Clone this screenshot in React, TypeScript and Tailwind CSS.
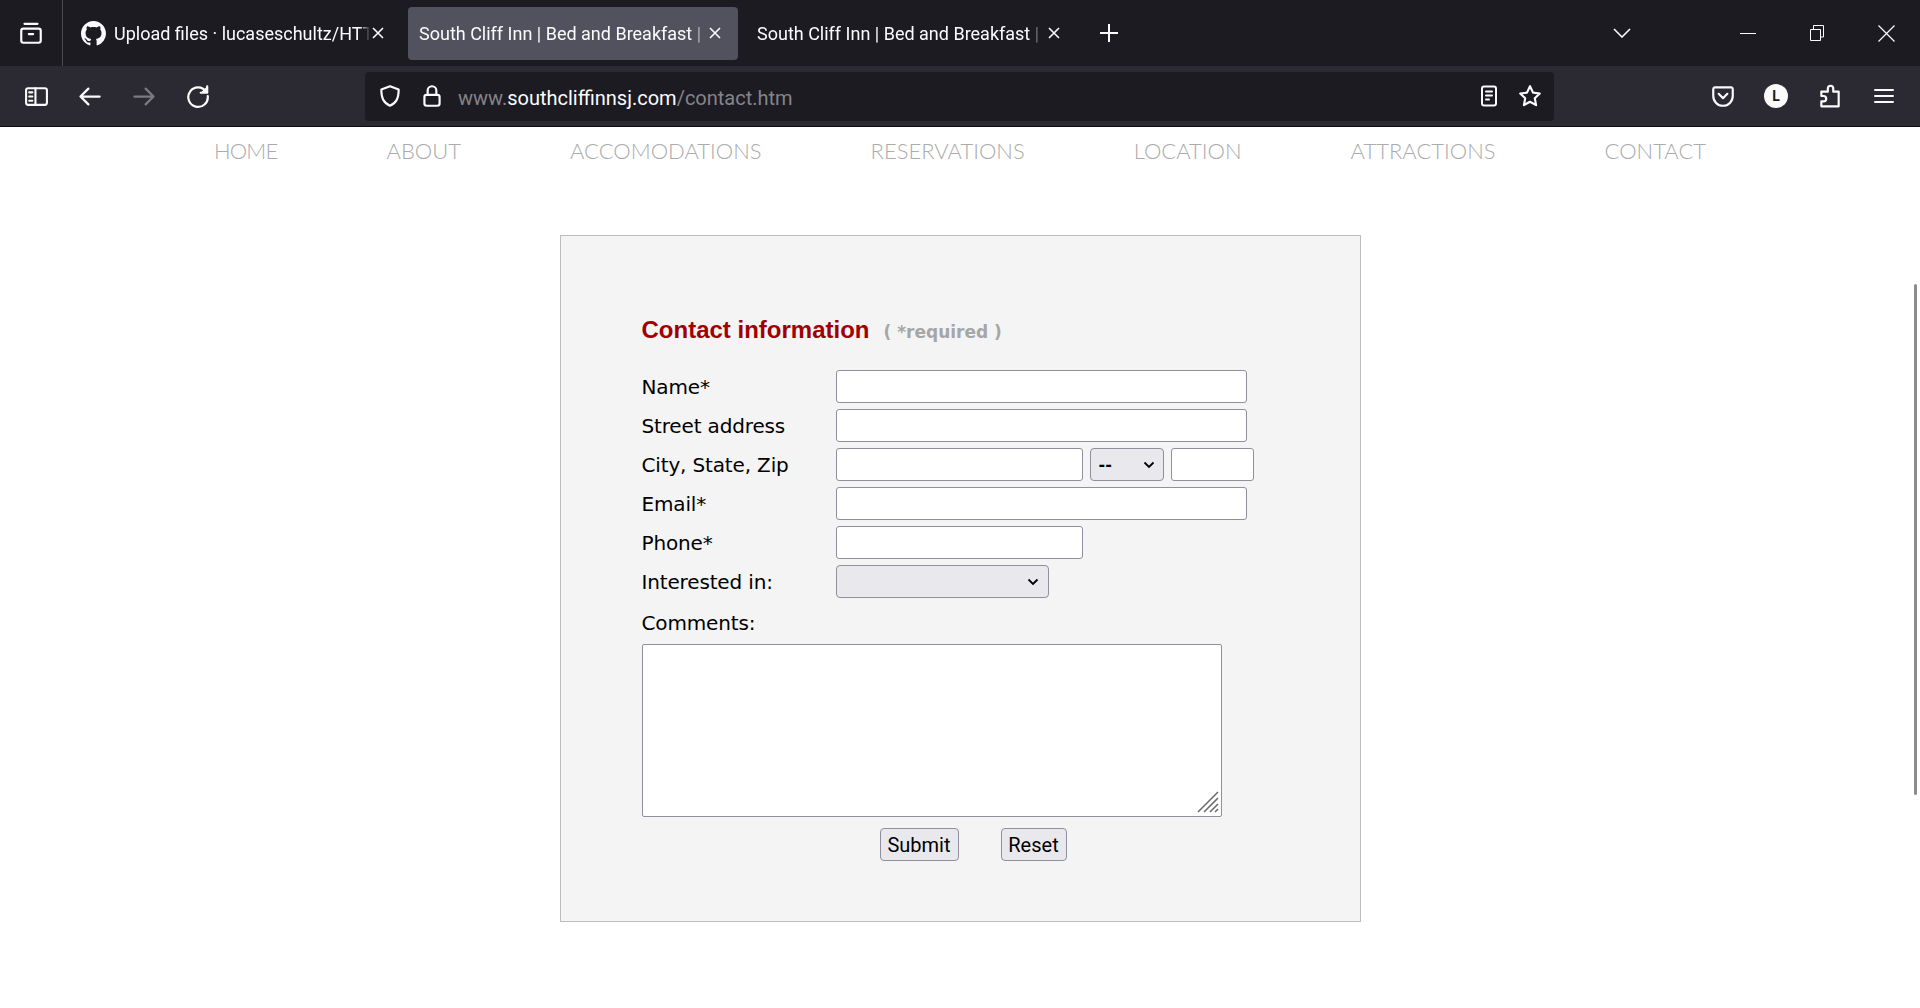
import React from "react";

const ui = "font-['Roboto',sans-serif]";
const label = "text-[20px] leading-[33px] text-black font-['DejaVu_Sans',sans-serif] tracking-[-0.15px]";
const inputCls = "h-[33px] rounded-[3px] border border-[#8f8f9d] bg-white";
const selectCls = "h-[33px] rounded-[4px] border border-[#8f8f9d] bg-[#e9e9ed] flex items-center justify-between";
const fade = "overflow-hidden whitespace-nowrap [mask-image:linear-gradient(to_right,black_96%,transparent)]";

function Chevron({ className = "" }: { className?: string }) {
  return (
    <svg className={className} width="12" height="8" viewBox="0 0 12 8" fill="none" stroke="#000" strokeWidth="1.8">
      <path d="M1.5 1.5 6 6l4.5-4.5" />
    </svg>
  );
}

function Close({ className = "" }: { className?: string }) {
  return (
    <svg className={className} width="12" height="12" viewBox="0 0 12 12" fill="none" stroke="#fbfbfe" strokeWidth="1.6">
      <path d="M1 1l10 10M11 1 1 11" />
    </svg>
  );
}

function Icon({ children, size = 22, className = "" }: { children: React.ReactNode; size?: number; className?: string }) {
  return (
    <svg className={className} width={size} height={size} viewBox="0 0 24 24" fill="none" stroke="#fbfbfe" strokeWidth="2" strokeLinecap="round" strokeLinejoin="round">
      {children}
    </svg>
  );
}

function Row({ name, children }: { name: string; children: React.ReactNode }) {
  return (
    <div className="flex h-[33px] items-center mb-[6px]">
      <div className={`w-[194px] mt-[2px] ${label}`}>{name}</div>
      {children}
    </div>
  );
}

export default function App() {
  return (
    <div className="h-[1008px] w-full overflow-hidden bg-white relative">
      {/* tab strip */}
      <div className={`h-[66px] bg-[#1c1b22] flex items-center text-[#fbfbfe] text-[18px] ${ui}`}>
        <div className="w-[63px] h-full flex items-center justify-center border-r border-[#4a4950]">
          <Icon size={26}>
            <rect x="3" y="8" width="18" height="13" rx="2" />
            <path d="M6 3.5h12M10 13h4" />
          </Icon>
        </div>
        <div className="w-[345px] h-[53px] flex items-center pl-[18px] shrink-0">
          <svg width="25" height="25" viewBox="0 0 16 16" fill="#fbfbfe" className="shrink-0">
            <path d="M8 0C3.58 0 0 3.58 0 8c0 3.54 2.29 6.53 5.47 7.59.4.07.55-.17.55-.38 0-.19-.01-.82-.01-1.49-2.01.37-2.53-.49-2.69-.94-.09-.23-.48-.94-.82-1.13-.28-.15-.68-.52-.01-.53.63-.01 1.08.58 1.23.82.72 1.21 1.87.87 2.33.66.07-.52.28-.87.51-1.07-1.78-.2-3.64-.89-3.64-3.95 0-.87.31-1.59.82-2.15-.08-.2-.36-1.02.08-2.12 0 0 .67-.21 2.2.82.64-.18 1.32-.27 2-.27s1.36.09 2 .27c1.53-1.04 2.2-.82 2.2-.82.44 1.1.16 1.92.08 2.12.51.56.82 1.27.82 2.15 0 3.07-1.87 3.75-3.65 3.95.29.25.54.73.54 1.48 0 1.07-.01 1.93-.01 2.2 0 .21.15.46.55.38A8.01 8.01 0 0 0 16 8c0-4.42-3.58-8-8-8z" />
          </svg>
          <div className={`ml-[8px] w-[256px] ${fade}`}>Upload files · lucaseschultz/HTTP</div>
          <Close className="ml-[2px] shrink-0" />
        </div>
        <div className="w-[330px] h-[53px] rounded-[4px] bg-[#52525e] flex items-center pl-[11px] shrink-0">
          <div className={`w-[286px] ${fade}`}>South Cliff Inn | Bed and Breakfast | Cape May</div>
          <Close className="ml-[4px] shrink-0" />
        </div>
        <div className="w-[330px] h-[53px] flex items-center pl-[19px] shrink-0">
          <div className={`w-[284px] ${fade}`}>South Cliff Inn | Bed and Breakfast | Cape May</div>
          <Close className="ml-[7px] shrink-0" />
        </div>
        <svg width="18" height="18" viewBox="0 0 18 18" stroke="#fbfbfe" strokeWidth="2" className="ml-[32px]">
          <path d="M9 0v18M0 9h18" />
        </svg>
        <div className="flex-1" />
        <svg width="18" height="10" viewBox="0 0 18 10" fill="none" stroke="#fbfbfe" strokeWidth="1.6" className="mr-[109px]">
          <path d="M1 1l8 8 8-8" />
        </svg>
        <div className="w-[16px] h-px bg-[#fbfbfe] mr-[54px]" />
        <svg width="14" height="16" viewBox="0 0 14 16" fill="none" stroke="#fbfbfe" strokeWidth="1" className="mr-[54px]">
          <path d="M.5 4.5h10v11H.5zM3.5 4V.5h10V12H11" />
        </svg>
        <svg width="17" height="17" viewBox="0 0 17 17" stroke="#fbfbfe" strokeWidth="1.2" className="mr-[25px]">
          <path d="M.5.5l16 16M16.5.5l-16 16" />
        </svg>
      </div>
      {/* toolbar */}
      <div className={`h-[61px] bg-[#2b2a33] border-b border-[#0c0c0d] flex items-center text-[#fbfbfe] ${ui}`}>
        <Icon size={25} className="ml-[24px]">
          <rect x="2" y="4" width="20" height="16" rx="2" />
          <path d="M11 4v16M5 8h3M5 12h3M5 16h3" />
        </Icon>
        <Icon size={27} className="ml-[27px]"><path d="M21 12H4M11 5l-7 7 7 7" /></Icon>
        <svg width="27" height="27" viewBox="0 0 24 24" fill="none" stroke="#7b7a81" strokeWidth="2" strokeLinecap="round" strokeLinejoin="round" className="ml-[28px]"><path d="M3 12h17M13 5l7 7-7 7" /></svg>
        <Icon size={26} className="ml-[27px]">
          <path d="M19.5 8A9 9 0 1 0 21 12" />
          <path d="M20.5 3v6h-6" fill="#fbfbfe" />
        </Icon>
        <div className="ml-[154px] w-[1189px] h-[49px] rounded-[4px] bg-[#1c1b22] flex items-center shrink-0">
          <Icon size={26} className="ml-[12px]"><path d="M12 3l8 3c0 8-2 12-8 15C6 18 4 14 4 6z" /></Icon>
          <Icon size={26} className="ml-[16px]">
            <rect x="5" y="11" width="14" height="10" rx="2" />
            <path d="M8 11V7a4 4 0 0 1 8 0v4" />
          </Icon>
          <div className="ml-[13px] mt-[3px] text-[20px] whitespace-nowrap text-[#85848a]">
            www.<span className="text-[#fbfbfe]">southcliffinnsj.com</span>/contact.htm
          </div>
          <div className="flex-1" />
          <Icon size={24}>
            <rect x="5" y="2.5" width="14" height="19" rx="2" />
            <path d="M9 7.5h6M9 11.5h6M9 15.5h3" />
          </Icon>
          <Icon size={26} className="ml-[16px] mr-[11px]"><path d="M12 3l2.8 5.9 6.2.8-4.6 4.3 1.2 6.4L12 17.3 6.4 20.4l1.2-6.4L3 9.7l6.2-.8z" /></Icon>
        </div>
        <div className="flex-1" />
        <Icon size={26} className="mr-[28px]">
          <path d="M4 4h16a2 2 0 0 1 1 2v6a9 9 0 0 1-18 0V6a2 2 0 0 1 1-2z" />
          <path d="M8 10l4 4 4-4" />
        </Icon>
        <div className="w-[24px] h-[24px] rounded-full bg-[#fbfbfe] text-[#1c1b22] text-[14px] font-bold flex items-center justify-center mr-[29px]">L</div>
        <Icon size={26} className="mr-[29px]">
          <path d="M4 21.5V17h2a2.5 2.5 0 0 0 0-5H4V8h6V5a2.5 2.5 0 0 1 5 0v3h5v13.5z" />
        </Icon>
        <Icon size={24} className="mr-[24px]"><path d="M3 6h18M3 12h18M3 18h18" /></Icon>
      </div>
      {/* nav */}
      <div className="h-[47px] flex items-center justify-center gap-[109px] text-[22px] font-light text-[#ababab] font-['Lato',sans-serif]">
        <span className="tracking-[-0.8px]">HOME</span><span>ABOUT</span><span>ACCOMODATIONS</span><span>RESERVATIONS</span><span>LOCATION</span><span>ATTRACTIONS</span><span>CONTACT</span>
      </div>
      {/* panel */}
      <div className="mt-[61px] mx-auto w-[801px] h-[687px] border border-[#bdbdbd] bg-[#f4f4f4] pl-[81px] pt-[76px]">
        <div className="flex items-baseline h-[58px] font-bold">
          <span className="text-[24px] text-[#a00000] font-['Liberation_Sans',sans-serif]">Contact information</span>
          <span className="ml-[14px] text-[17px] text-[#a6a6a6] font-['DejaVu_Sans',sans-serif]">( *required )</span>
        </div>
        <Row name="Name*"><div className={`${inputCls} w-[411px]`} /></Row>
        <Row name="Street address"><div className={`${inputCls} w-[411px]`} /></Row>
        <Row name="City, State, Zip">
          <div className={`${inputCls} w-[247px]`} />
          <div className={`${selectCls} w-[74px] ml-[7px] pl-[8px] pr-[8px] font-['DejaVu_Sans',sans-serif] font-bold text-[16px]`}>
            <span>--</span>
            <Chevron />
          </div>
          <div className={`${inputCls} w-[83px] ml-[7px]`} />
        </Row>
        <Row name="Email*"><div className={`${inputCls} w-[411px]`} /></Row>
        <Row name="Phone*"><div className={`${inputCls} w-[247px]`} /></Row>
        <Row name="Interested in:">
          <div className={`${selectCls} w-[213px] justify-end pr-[9px]`}><Chevron /></div>
        </Row>
        <div className={`${label} mt-[9px] h-[33px]`}>Comments:</div>
        <div className="relative w-[580px] h-[173px] border border-[#8f8f9d] rounded-[2px] bg-white mt-[4px]">
          <svg width="22" height="22" viewBox="0 0 22 22" stroke="#6b6b6b" strokeWidth="1.6" className="absolute right-[2px] bottom-[3px]">
            <path d="M1 21 21 1M7 21 21 7M13 21l8-8M18 21l3-3" />
          </svg>
        </div>
        <div className="flex mt-[11px] ml-[238px] gap-[42px]">
          <div className="w-[79px] h-[33px] rounded-[4px] border border-[#8f8f9d] bg-[#e9e9ed] flex items-center justify-center text-[20px] text-black font-['Roboto',sans-serif]">Submit</div>
          <div className="w-[66px] h-[33px] rounded-[4px] border border-[#8f8f9d] bg-[#e9e9ed] flex items-center justify-center text-[20px] text-black font-['Roboto',sans-serif]">Reset</div>
        </div>
      </div>
      <div className="absolute right-[3px] top-[284px] w-[3px] h-[511px] bg-[#8c8c8c] rounded-full" />
    </div>
  );
}
